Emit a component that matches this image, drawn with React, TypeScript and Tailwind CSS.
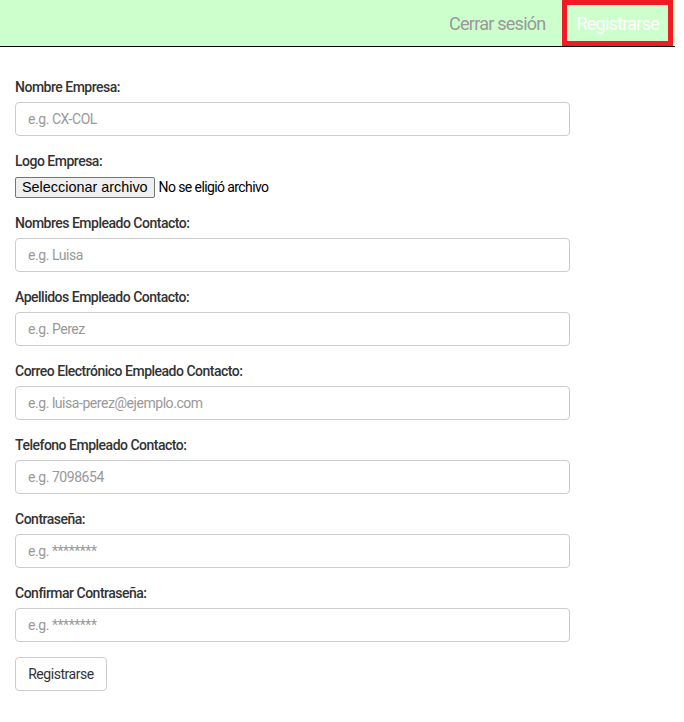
import React from 'react';

const fields = [
  { label: 'Nombres Empleado Contacto:', placeholder: 'e.g. Luisa' },
  { label: 'Apellidos Empleado Contacto:', placeholder: 'e.g. Perez' },
  { label: 'Correo Electrónico Empleado Contacto:', placeholder: 'e.g. luisa-perez@ejemplo.com' },
  { label: 'Telefono Empleado Contacto:', placeholder: 'e.g. 7098654' },
  { label: 'Contraseña:', placeholder: 'e.g. ********' },
  { label: 'Confirmar Contraseña:', placeholder: 'e.g. ********' },
];

const font = "font-['Roboto',sans-serif] tracking-[-0.45px]";

function Label({ children }: { children: React.ReactNode }) {
  return (
    <label className="block h-5 mb-[5px] text-[14px] leading-5 font-medium tracking-[-0.5px] text-[#333]">
      {children}
    </label>
  );
}

function Field({ label, placeholder }: { label: string; placeholder: string }) {
  return (
    <div className="mb-[15px]">
      <Label>{label}</Label>
      <input
        className={`block w-[555px] h-[34px] px-3 rounded border border-[#ccc] bg-white text-[14px] placeholder:text-[#999] outline-none ${font}`}
        placeholder={placeholder}
      />
    </div>
  );
}

export default function App() {
  return (
    <div className={`w-[684px] min-h-[722px] bg-white ${font}`}>
      <nav className="w-[675px] h-[47px] bg-[#ccffcc] border-b border-black flex justify-end items-stretch">
        <a className="flex items-center px-[17px] text-[18px] tracking-[-0.75px] text-[#999]">Cerrar sesión</a>
        <a className="flex items-center px-[9px] mr-[2px] text-[18px] tracking-[-0.75px] text-white border-[5px] border-[#ee1c25]">
          Registrarse
        </a>
      </nav>
      <form className="pt-[30px] pl-[15px]">
        <Field label="Nombre Empresa:" placeholder="e.g. CX-COL" />
        <div className="mb-[15px]">
          <Label>Logo Empresa:</Label>
          <div className="flex items-center h-[22px]">
            <button
              type="button"
              className="h-[21px] px-[6px] bg-[#efefef] border border-[#767676] rounded-[2px] text-[14.4px] leading-none tracking-normal text-black font-['Liberation_Sans',sans-serif]"
            >
              Seleccionar archivo
            </button>
            <span className="ml-1 text-[14px] tracking-[-0.6px] text-black">No se eligió archivo</span>
          </div>
        </div>
        {fields.map((f) => (
          <Field key={f.label} label={f.label} placeholder={f.placeholder} />
        ))}
        <button
          type="button"
          className="h-[34px] w-[92px] rounded border border-[#ccc] bg-white text-[14px] text-[#333]"
        >
          Registrarse
        </button>
      </form>
    </div>
  );
}
